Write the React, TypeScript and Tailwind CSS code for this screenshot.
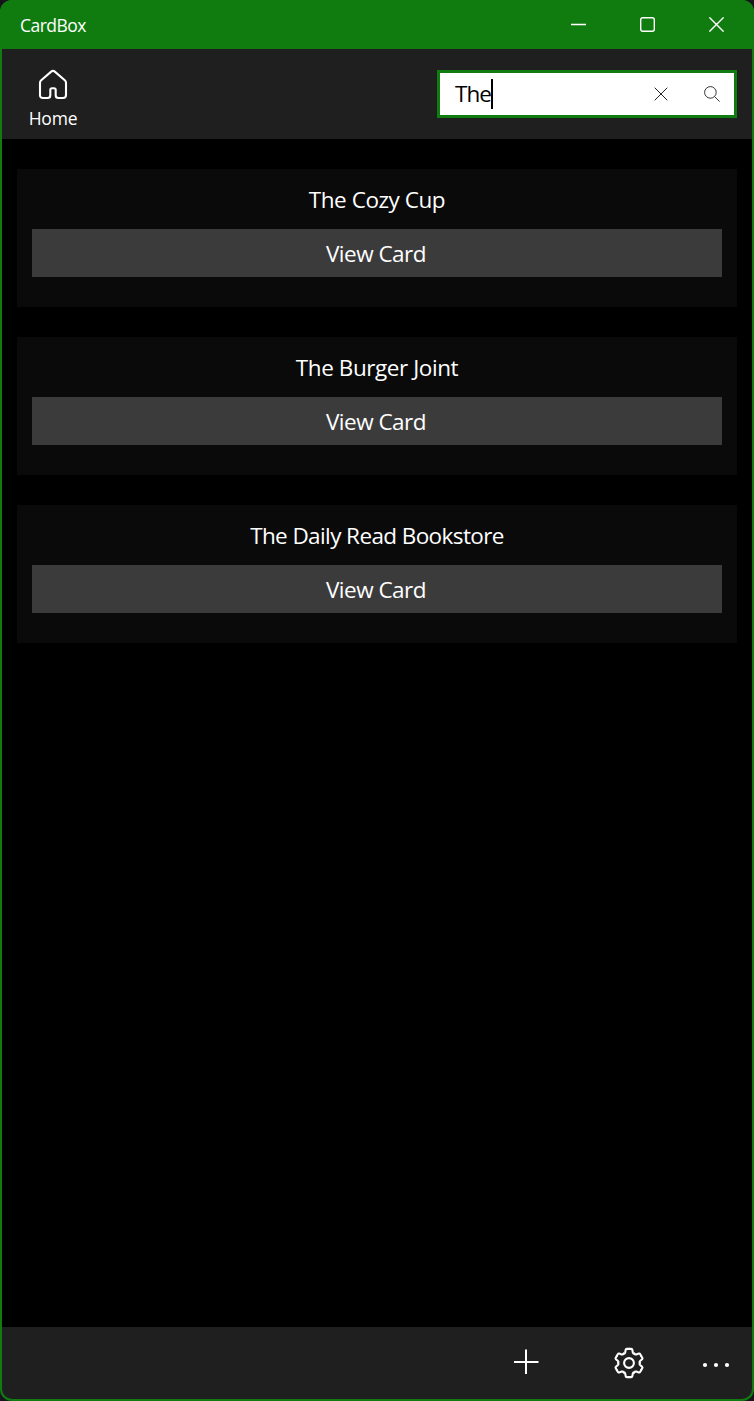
import React from "react";

const cards = [
  { name: "The Cozy Cup", tracking: "tracking-[-0.45px]" },
  { name: "The Burger Joint", tracking: "tracking-[-0.43px]" },
  { name: "The Daily Read Bookstore", tracking: "tracking-[-0.6px]" },
];

const toothHalf = "M0 -14.1H2.3Q3.1 -14.1 3.3 -13.2L3.8 -10.6Q4.1 -9.3 5.4 -9.35";

function GearIcon() {
  return (
    <svg width="32" height="32" viewBox="-16 -16 32 32" fill="none" stroke="white" strokeWidth="2.1" strokeLinecap="round" strokeLinejoin="round">
      {[0, 60, 120, 180, 240, 300].map((a) => (
        <g key={a} transform={`rotate(${a})`}>
          <path d={toothHalf} />
          <path d={toothHalf} transform="scale(-1 1)" />
        </g>
      ))}
      <circle r="4.9" />
    </svg>
  );
}

function TitleBar() {
  return (
    <header className="flex h-[49px] shrink-0 items-center justify-between bg-[#107c10] pl-5">
      <span className="pt-px text-[17.5px] leading-6 tracking-[-0.55px]">CardBox</span>
      <div className="flex h-full">
        <button aria-label="Minimize" className="flex w-[69px] items-center justify-center">
          <svg width="15" height="15" viewBox="0 0 15 15" stroke="white" strokeWidth="1.4"><path d="M0 7.5H15" /></svg>
        </button>
        <button aria-label="Maximize" className="flex w-[69px] items-center justify-center">
          <svg width="15" height="15" viewBox="0 0 15 15" fill="none" stroke="white" strokeWidth="1.4"><rect x="0.7" y="0.7" width="13.6" height="13.6" rx="2" /></svg>
        </button>
        <button aria-label="Close" className="mr-[3px] flex w-[69px] items-center justify-center">
          <svg width="15" height="15" viewBox="0 0 15 15" stroke="white" strokeWidth="1.4"><path d="M.4 .4L14.6 14.6M14.6 .4L.4 14.6" /></svg>
        </button>
      </div>
    </header>
  );
}

function Toolbar() {
  return (
    <nav className="mx-0.5 flex h-[90px] shrink-0 items-start justify-between bg-[#1f1f1f] pr-[15px]">
      <button className="flex w-[102px] flex-col items-center pt-5">
        <svg width="30" height="31" viewBox="0 0 30 31" fill="none" stroke="white" strokeWidth="2.1" strokeLinejoin="round">
          <path d="M13.5 2.4Q15 1.2 16.5 2.4L26.8 11.2Q28 12.3 28 13.8V26Q28 29 25 29H20.5Q17.7 29 17.7 26.2V21Q17.7 19.2 15.9 19.2H14.1Q12.3 19.2 12.3 21V26.2Q12.3 29 9.5 29H5Q2 29 2 26V13.8Q2 12.3 3.2 11.2Z" />
        </svg>
        <span className="mt-1.5 text-[17.5px] leading-6 tracking-[-0.2px]">Home</span>
      </button>
      <div className="mt-[21px] flex h-12 w-[300px] items-center border-3 border-[#107c10] bg-white pl-[15px] text-black">
        <span className="w-9 whitespace-nowrap text-[22.5px] leading-[30px] tracking-[-1px]">The</span>
        <span className="h-[30px] w-0.5 bg-black" />
        <svg className="ml-auto" width="14" height="14" viewBox="0 0 14 14" stroke="#222" strokeWidth="1"><path d="M.7 .7L13.3 13.3M13.3 .7L.7 13.3" /></svg>
        <svg className="ml-9 mr-3.5" width="16" height="16" viewBox="0 0 16 16" fill="none" stroke="#333" strokeWidth="1"><circle cx="6.4" cy="6.4" r="5.8" /><path d="M10.6 10.6L15.6 15.6" /></svg>
      </div>
    </nav>
  );
}

export default function App() {
  return (
    <div className="h-[1401px] w-[754px] bg-[#15151b] font-['Open_Sans','Noto_Sans',sans-serif] text-white">
      <div className="flex h-full flex-col overflow-hidden rounded-[12px] bg-[#107c10] pb-0.5">
        <TitleBar />
        <Toolbar />
        <main className="mx-0.5 flex flex-1 flex-col gap-[30px] bg-black px-[15px] pt-[30px]">
          {cards.map(({ name, tracking }) => (
            <section key={name} className="h-[138px] bg-[#0a0a0a] px-[15px] pt-4 text-center text-[22.5px] leading-[30px]">
              <h2 className={`h-11 ${tracking}`}>{name}</h2>
              <button className="flex h-12 w-full items-center justify-center bg-[#3b3b3b] tracking-[-0.5px]"><span className="pr-0.5 pt-0.5">View Card</span></button>
            </section>
          ))}
        </main>
        <footer className="mx-0.5 flex h-[72px] shrink-0 items-center justify-end rounded-b-[10px] bg-[#1f1f1f] pr-[22px]">
          <button aria-label="Add" className="flex w-8 justify-center pb-0.5">
            <svg width="26" height="26" viewBox="0 0 26 26" stroke="white" strokeWidth="2"><path d="M1 13H25.5M13 .5V25" /></svg>
          </button>
          <button aria-label="Settings" className="ml-[71px]"><GearIcon /></button>
          <button aria-label="More" className="ml-[57px] pt-[3px]">
            <svg width="28" height="6" viewBox="0 0 28 6" fill="white"><circle cx="3" cy="3" r="2.1" /><circle cx="14" cy="3" r="2.1" /><circle cx="25" cy="3" r="2.1" /></svg>
          </button>
        </footer>
      </div>
    </div>
  );
}
